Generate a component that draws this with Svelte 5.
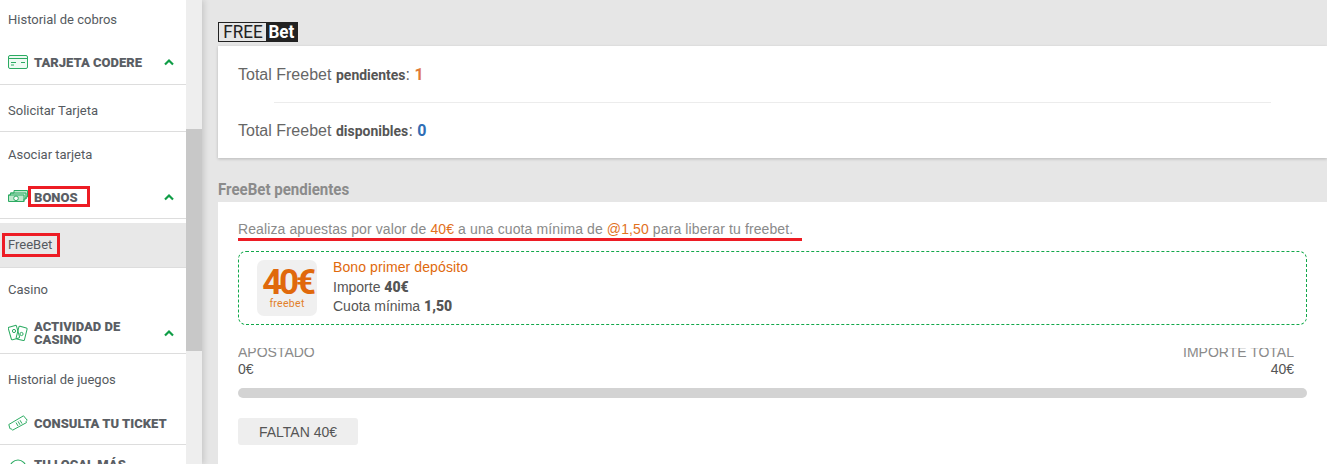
<script lang="ts">
  const chevron = 'M1 6.5 L5 2.5 L9 6.5';
</script>

{#snippet chev()}
  <svg class="chev" width="10" height="8" viewBox="0 0 10 8" fill="none" stroke="#0f9d46" stroke-width="2.2">
    <path d={chevron} />
  </svg>
{/snippet}

<div class="page">
  <aside class="side">
    <nav class="menu">
      <div class="item first">Historial de cobros</div>

      <div class="head h-tarjeta line">
        <svg class="ico" width="20" height="14" viewBox="0 0 20 14" fill="#effaf3" stroke="#2cab62" stroke-width="1">
          <rect x="0.5" y="0.5" width="19" height="13" rx="1.5" />
          <path d="M0.5 3.5 H19.5" />
          <path d="M3 7.5 H8 M3 10 H6 M13 7.5 H17" />
        </svg>
        <span class="head-label">TARJETA CODERE</span>
        {@render chev()}
      </div>
      <div class="item i-sol line">Solicitar Tarjeta</div>
      <div class="item i-aso">Asociar tarjeta</div>

      <div class="head h-bonos line">
        <svg class="ico" width="20" height="13" viewBox="0 0 20 13" fill="#bfe8cd" stroke="#2cab62" stroke-width="1">
          <path d="M6 0.5 H19.5 V7 H18 V9 H16 V11.5 H0.5 V5 H2.5 V3 H6 Z" />
          <path d="M2.5 3 H18 V9 M0.5 5 H16 V11.5" fill="none" />
          <circle cx="8" cy="8.3" r="2.3" fill="#fff" />
        </svg>
        <span class="head-label"><span class="boxed bonos">BONOS</span></span>
        {@render chev()}
      </div>
      <div class="item active line"><span class="boxed free">FreeBet</span></div>
      <div class="item i-cas">Casino</div>

      <div class="head h-act line">
        <svg class="ico" width="20" height="20" viewBox="0 0 20 20" fill="none" stroke="#2cab62" stroke-width="1">
          <rect x="1.5" y="3" width="8.5" height="13" rx="1" transform="rotate(-16 6 9)" />
          <rect x="9.5" y="4" width="8.5" height="13" rx="1" transform="rotate(14 14 10)" />
          <circle cx="6" cy="8" r="1.6" />
          <circle cx="13.5" cy="11" r="1.6" />
        </svg>
        <span class="head-label">ACTIVIDAD DE CASINO</span>
        {@render chev()}
      </div>
      <div class="item i-jue">Historial de juegos</div>

      <div class="head h-tic line">
        <svg class="ico" width="20" height="16" viewBox="0 0 20 16" fill="none" stroke="#2cab62" stroke-width="1">
          <path d="M0.8 9.5 L15.5 0.8 L19.2 5.2 C18 6 17.8 7 18.5 7.6 L4.5 15.2 C3.8 13.8 2.8 13.6 2 13.8 Z" />
          <path d="M8 7.5 L10 11 M10 6.3 L12 9.8 M12 5.2 L14 8.6" />
        </svg>
        <span class="head-label">CONSULTA TU TICKET</span>
      </div>

      <div class="head h-local">
        <svg class="ico" width="20" height="20" viewBox="0 0 20 20" fill="none" stroke="#2cab62" stroke-width="1.2">
          <circle cx="10" cy="10" r="8" />
        </svg>
        <span class="head-label">TU LOCAL MÁS CERCANO</span>
      </div>
    </nav>
    <div class="track"><div class="thumb"></div></div>
  </aside>

  <main class="main">
    <div class="logo"><span class="logo-free"><span>FREE</span></span><span class="logo-bet"><span>Bet</span></span></div>

    <section class="totals">
      <p class="total">Total Freebet <b class="cond">pendientes</b>: <strong class="orange">1</strong></p>
      <hr class="rule" />
      <p class="total">Total Freebet <b class="cond">disponibles</b>: <strong class="blue">0</strong></p>
    </section>

    <h2 class="sub"><span>FreeBet pendientes</span></h2>

    <section class="panel">
      <p class="intro"><span class="under">Realiza apuestas por valor de <em>40€</em> a una cuota mínima de <em>@1,50</em> para liberar tu freebet.</span></p>

      <div class="bonus">
        <div class="tile">
          <span class="tile-num">40€</span>
          <span class="tile-sub">freebet</span>
        </div>
        <div class="info">
          <div class="info-title">Bono primer depósito</div>
          <div>Importe <b>40€</b></div>
          <div>Cuota mínima <b>1,50</b></div>
        </div>
      </div>

      <div class="amounts">
        <div>
          <div class="cap">APOSTADO</div>
          <div class="val">0€</div>
        </div>
        <div class="right">
          <div class="cap">IMPORTE TOTAL</div>
          <div class="val">40€</div>
        </div>
      </div>
      <div class="bar"></div>
      <button class="left-btn">FALTAN 40€</button>
    </section>
  </main>
</div>

<style>
  :global(body) {
    margin: 0;
    background: #e6e6e6;
    overflow: hidden;
  }

  .page {
    display: flex;
    height: 464px;
    overflow: hidden;
    font-family: "Liberation Sans", Arial, sans-serif;
  }

  .side {
    display: flex;
    flex: 0 0 202px;
    background: #fff;
    position: relative;
    z-index: 1;
    box-shadow: 2px 0 6px rgba(0, 0, 0, 0.14);
  }

  .menu {
    flex: 0 0 186px;
    overflow: hidden;
    font-family: Roboto, sans-serif;
    background: #fff;
  }

  .track {
    flex: 1;
    background: #eeeeee;
    padding-top: 129px;
  }

  .thumb {
    height: 222px;
    background: #c8c8c8;
  }

  .item {
    display: flex;
    align-items: center;
    padding-left: 8px;
    box-sizing: border-box;
    font-size: 13px;
    color: #555a60;
  }

  .line {
    border-bottom: 1px solid #ddd;
  }

  .first { height: 41px; padding-bottom: 3px; }
  .i-sol { height: 47px; padding-top: 4px; }
  .i-aso { height: 44px; }
  .i-cas { height: 43px; }
  .i-jue { height: 48px; padding-top: 3px; }

  .active {
    height: 45px;
    margin-top: 4px;
    background: #e8e8e8;
  }

  .head {
    display: flex;
    align-items: center;
    box-sizing: border-box;
    padding: 0 12px 0 8px;
    font-size: 13px;
    font-weight: 900;
    line-height: 13px;
    color: #5a5e64;
  }

  .h-tarjeta { height: 44px; padding-bottom: 1px; }
  .h-bonos { height: 43px; padding-bottom: 1px; }
  .h-act { height: 43px; padding-top: 1px; }
  .h-tic { height: 43px; }
  .h-local { height: 44px; align-items: flex-start; padding-top: 13px; }

  .ico {
    flex: 0 0 20px;
    margin-right: 6px;
  }

  .head-label {
    flex: 1;
  }

  .chev {
    flex: none;
  }

  .boxed {
    display: inline-block;
    border: 3px solid #ed1c24;
    box-sizing: border-box;
  }

  .bonos {
    width: 62px;
    height: 21px;
    margin: 0 0 0 -6px;
    padding: 2px 0 0 3px;
    line-height: 13px;
  }

  .free {
    width: 58px;
    height: 24px;
    margin-left: -6px;
    padding-left: 3px;
    line-height: 18px;
  }

  .main {
    flex: 1;
    min-width: 0;
    padding: 22px 0 0 16px;
    color: #555a60;
  }

  .logo {
    display: flex;
    width: 80px;
    height: 20px;
    box-sizing: border-box;
    border: 1px solid #222;
    font-family: Roboto, sans-serif;
    font-size: 19px;
    line-height: 18px;
    margin-bottom: 4px;
  }

  .logo-free {
    flex: 0 0 47px;
    text-align: center;
    color: #222;
    background: #e6e6e6;
  }

  .logo-free span,
  .logo-bet span {
    display: inline-block;
    transform: scaleX(0.9);
  }

  .logo-bet {
    flex: 1;
    text-align: center;
    font-weight: 700;
    color: #fff;
    background: #222;
  }

  .totals {
    background: #fff;
    height: 112px;
    box-sizing: border-box;
    padding: 18px 56px 0 20px;
    box-shadow: 0 1px 3px rgba(0, 0, 0, 0.2);
  }

  .total {
    margin: 0;
    font-size: 16px;
    line-height: 22px;
    color: #666;
  }

  .cond {
    display: inline-block;
    font-family: Roboto, sans-serif;
    font-size: 15px;
    font-weight: 700;
    color: #555;
    transform: scaleX(0.93);
    transform-origin: left;
    margin-right: -5px;
  }

  .orange {
    font-family: Roboto, sans-serif;
    color: #e07b39;
    font-weight: 700;
  }

  .blue {
    font-family: Roboto, sans-serif;
    color: #2f6db5;
    font-weight: 700;
  }

  .rule {
    border: 0;
    border-top: 1px solid #ececec;
    margin: 16px 0 17px 36px;
  }

  .sub {
    margin: 0;
    height: 44px;
    box-sizing: border-box;
    padding-top: 23px;
    font-family: Roboto, sans-serif;
    font-size: 16px;
    line-height: 18px;
    font-weight: 700;
    color: #8b8b8b;
  }

  .sub span {
    display: inline-block;
    transform: scaleX(0.94);
    transform-origin: left;
  }

  .panel {
    background: #fff;
    padding: 18px 20px 0 20px;
    height: 262px;
    box-sizing: border-box;
  }

  .intro {
    margin: 0;
    height: 31px;
    font-size: 14px;
    line-height: 18px;
    letter-spacing: 0.11px;
    color: #8a8a8a;
  }

  .under {
    display: inline-block;
    border-bottom: 3px solid #ed1c24;
    padding-right: 9px;
  }

  .intro em {
    font-style: normal;
    color: #e2711d;
  }

  .bonus {
    display: flex;
    align-items: center;
    gap: 16px;
    box-sizing: border-box;
    height: 74px;
    padding: 0 18px;
    border: 1px dashed #12a84a;
    border-radius: 8px;
  }

  .tile {
    display: flex;
    flex-direction: column;
    align-items: center;
    width: 60px;
    height: 56px;
    border-radius: 7px;
    background: #f0f0f0;
    color: #e0690c;
  }

  .tile-num {
    font-family: Roboto, sans-serif;
    font-size: 35px;
    line-height: 34px;
    margin: 6px 0 0 1px;
    font-weight: 700;
    letter-spacing: -3.2px;
  }

  .tile-sub {
    font-family: Roboto, sans-serif;
    font-size: 10.5px;
    line-height: 11px;
    margin-top: -2px;
    letter-spacing: 0.3px;
    color: #e2802a;
  }

  .info {
    font-size: 14px;
    line-height: 19.5px;
    color: #555;
    margin-top: -1px;
  }

  .info-title {
    color: #e0690c;
    letter-spacing: 0.1px;
  }

  .info b {
    font-family: Roboto, sans-serif;
    font-weight: 900;
  }

  .amounts {
    display: flex;
    justify-content: space-between;
    padding: 0 13px 0 0;
    margin-top: 23px;
    font-size: 14px;
    color: #555;
  }

  .right {
    text-align: right;
  }

  .cap {
    display: flex;
    align-items: flex-end;
    height: 10px;
    line-height: 12px;
    overflow: hidden;
    color: #8a8a8a;
  }

  .right .cap {
    justify-content: flex-end;
  }

  .val {
    line-height: 18px;
    margin-top: 2px;
  }

  .bar {
    height: 10px;
    margin-top: 10px;
    border-radius: 5px;
    background: #d3d3d3;
  }

  .left-btn {
    display: block;
    width: 120px;
    height: 27px;
    margin-top: 20px;
    padding: 0;
    border: 0;
    border-radius: 3px;
    background: #eeeeee;
    font-family: "Liberation Sans", Arial, sans-serif;
    font-size: 14px;
    color: #555;
  }
</style>
